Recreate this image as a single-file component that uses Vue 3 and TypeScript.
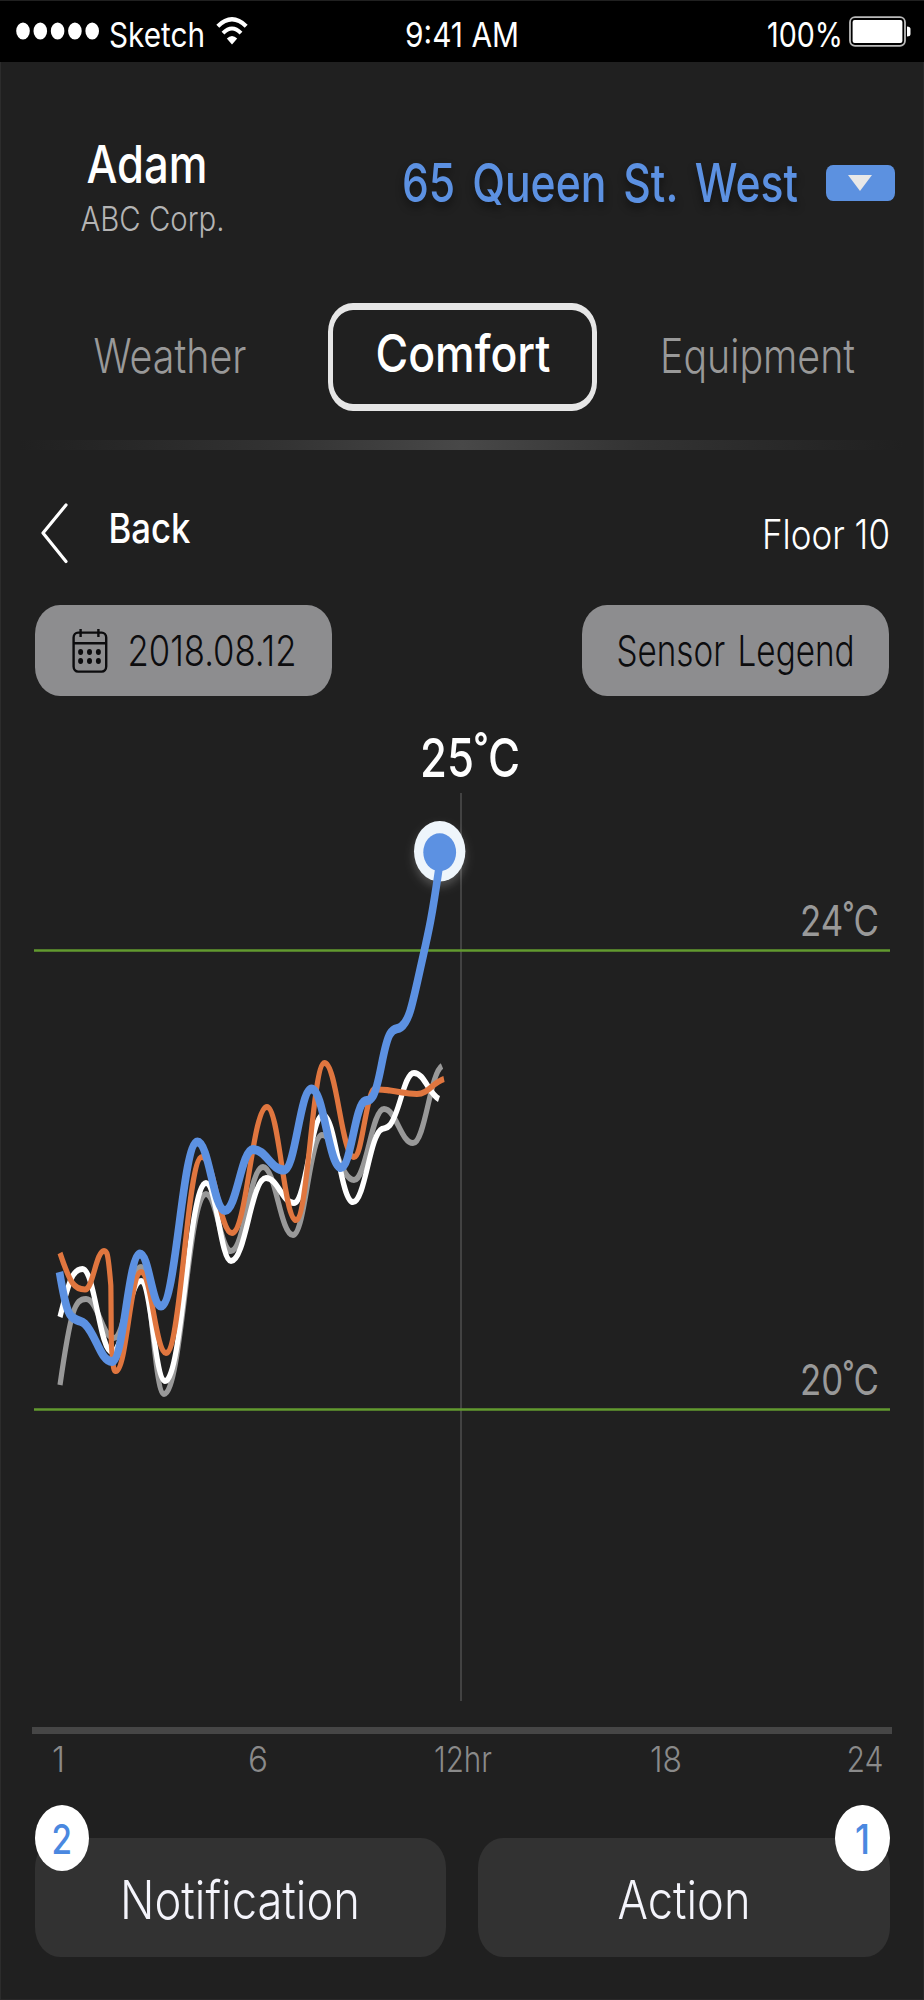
<script setup lang="ts">
import { h, type FunctionalComponent } from 'vue'

interface FitProps {
  text: string
  w: number
  cap: number
  weight?: number
  lead?: number
}

// Condensed label: the box is as wide as the word and as tall as its capitals.
const Fit: FunctionalComponent<FitProps> = (p) => {
  const size = p.cap / 0.727
  const lead = p.lead ?? size * 0.06
  return h('svg', { class: 'fit', width: p.w, height: p.cap }, [
    h(
      'text',
      {
        x: -lead,
        y: p.cap,
        'font-size': size,
        'font-weight': p.weight ?? 400,
        textLength: p.w + lead * 2,
        lengthAdjust: 'spacingAndGlyphs',
      },
      p.text,
    ),
  ])
}
Fit.props = ['text', 'w', 'cap', 'weight', 'lead']

type Point = [x: number, y: number, slope?: number]
interface Series {
  name: string
  points: Point[]
}

const STRETCH = 1.2
const EASE = 0.42

const series: Series[] = [
  {
    name: 'gray',
    points: [
      [60, 1385, -7], [86, 1299], [114, 1338], [141, 1267], [164, 1394], [206, 1194], [231, 1251], [263, 1167],
      [293, 1235], [322, 1135], [354, 1180], [384, 1109], [413, 1143], [442, 1066, -0.6],
    ],
  },
  {
    name: 'white',
    points: [
      [60, 1317, -4], [82.5, 1269], [112, 1352], [141, 1281], [165, 1381], [206, 1183], [231, 1261], [266, 1178],
      [294, 1203], [323, 1115], [353, 1202], [382, 1129, -0.4], [390, 1125, -1.2], [414, 1073], [439, 1099, 0.5],
    ],
  },
  {
    name: 'orange',
    points: [
      [60, 1253, 3], [85, 1289.5], [104, 1251], [110.8, 1285, 12], [111.4, 1345, 14], [116, 1371], [141, 1272],
      [166, 1353], [202, 1157], [232, 1233], [267, 1107], [296, 1220], [324.5, 1063], [354, 1157],
      [369, 1101, -4], [378, 1089.5], [390, 1090.5, 0.12], [417, 1094], [444, 1079, -0.3],
    ],
  },
  {
    name: 'blue',
    points: [
      [59.5, 1272, 6], [77, 1320, 0.5], [85, 1324, 1], [112, 1361.5], [140, 1254], [161, 1306], [197.5, 1142],
      [225, 1210.5], [253, 1149.5], [284, 1170], [311.5, 1089], [341, 1167.5], [365, 1101, -0.3], [373, 1096, -1.6],
      [390, 1034, -1.6], [401, 1027, -0.7], [420, 970, -4.5], [439, 868, -7],
    ],
  },
]

function curve(points: Point[]): string {
  const y = (v: number) => (v / STRETCH).toFixed(2)
  let d = `M${points[0][0]} ${y(points[0][1])}`
  for (let i = 1; i < points.length; i++) {
    const [x0, y0, m0 = 0] = points[i - 1]
    const [x1, y1, m1 = 0] = points[i]
    const k = (x1 - x0) * EASE
    d += ` C${(x0 + k).toFixed(2)} ${y(y0 + m0 * k)} ${(x1 - k).toFixed(2)} ${y(y1 - m1 * k)} ${x1} ${y(y1)}`
  }
  return d
}

const hours = [
  { text: '1', w: 9, lead: 2 },
  { text: '6', w: 16, lead: 2 },
  { text: '12hr', w: 56, lead: 1 },
  { text: '18', w: 28, lead: 2 },
  { text: '24', w: 34, lead: 1.5 },
]
</script>

<template>
  <main class="phone">
    <header class="status">
      <div class="carrier">
        <svg class="signal" width="84" height="18" viewBox="0 0 84 18">
          <ellipse v-for="i in 5" :key="i" :cx="7 + (i - 1) * 17.3" cy="9" rx="6.8" ry="8.6" />
        </svg>
        <Fit text="Sketch" :w="94" :cap="25" :lead="1" />
        <svg class="wifi" width="32" height="28" viewBox="0 0 32 28">
          <path d="M1.8 9.2Q16-4.6 30.2 9.2" stroke-width="4.2" />
          <path d="M7 16.2Q16 7 25 16.2" stroke-width="4" />
          <path d="M16 27.5L10.8 21.6Q16 16.4 21.2 21.6Z" class="solid" />
        </svg>
      </div>
      <Fit class="clock" text="9:41 AM" :w="112" :cap="25" :lead="1" />
      <div class="power">
        <Fit text="100%" :w="74" :cap="25" :lead="1" />
        <svg class="battery" width="62" height="32" viewBox="0 0 62 32">
          <rect x="1" y="1.2" width="55" height="28.6" rx="5" class="shell" />
          <rect x="3.6" y="4" width="49.8" height="23" rx="2" />
          <path d="M58 10.5Q61.5 10.5 61.5 13V18Q61.5 20.5 58 20.5Z" />
        </svg>
      </div>
    </header>

    <section class="account">
      <div class="user">
        <Fit class="name" text="Adam" :w="118" :cap="38" :weight="500" :lead="1.5" />
        <Fit class="company" text="ABC Corp." :w="141" :cap="25" :weight="300" :lead="1.5" />
      </div>
      <div class="site">
        <Fit class="address" text="65 Queen St. West" :w="394" :cap="38.5" :weight="500" :lead="1" />
        <button class="drop" aria-label="Choose site">
          <svg width="24" height="16" viewBox="0 0 24 16"><path d="M0 0H24L12 16Z" /></svg>
        </button>
      </div>
    </section>

    <nav class="tabs">
      <span class="tab"><Fit text="Weather" :w="152" :cap="34.5" :weight="300" :lead="0.5" /></span>
      <span class="tab active"><Fit text="Comfort" :w="172" :cap="37.5" :weight="500" :lead="1.5" /></span>
      <span class="tab"><Fit text="Equipment" :w="191" :cap="34.5" :weight="300" :lead="2" /></span>
    </nav>
    <div class="divider"></div>

    <section class="crumbs">
      <svg class="chevron" width="30" height="62" viewBox="0 0 30 62">
        <path d="M27 3L4 31L27 59.5" />
      </svg>
      <Fit class="back" text="Back" :w="79" :cap="30" :weight="500" :lead="1.5" />
      <Fit class="floor" text="Floor 10" :w="124" :cap="29.5" :weight="300" :lead="2" />
    </section>

    <section class="filters">
      <button class="chip date">
        <svg class="calendar" width="36" height="44" viewBox="0 0 36 44">
          <rect x="1.6" y="3.6" width="32.6" height="39" rx="4.5" ry="5" />
          <path d="M1.6 14.2H34.2M8.6 0V8M26.4 0V8" />
          <g class="dots">
            <template v-for="cy in [23, 32]" :key="cy">
              <ellipse v-for="cx in [8.6, 17.5, 26.4]" :key="cx" :cx="cx" :cy="cy" rx="2.5" ry="3" />
            </template>
          </g>
        </svg>
        <Fit text="2018.08.12" :w="166" :cap="31" :weight="300" :lead="1.5" />
      </button>
      <button class="chip legend">
        <Fit text="Sensor Legend" :w="235" :cap="31" :weight="300" :lead="1.5" />
      </button>
    </section>

    <svg class="chart" width="924" height="1031" viewBox="0 696 924 1031">
      <defs>
        <filter id="halo" x="-50%" y="-50%" width="200%" height="200%">
          <feDropShadow dx="0" dy="5" stdDeviation="5" flood-color="#fff" flood-opacity="0.22" />
        </filter>
      </defs>
      <line class="now" x1="461" x2="461" y1="793" y2="1701" />
      <line class="limit" x1="34" x2="890" y1="950.5" y2="950.5" />
      <line class="limit" x1="34" x2="890" y1="1409.5" y2="1409.5" />
      <ellipse class="ring" cx="439.7" cy="851.3" rx="25.7" ry="30.3" filter="url(#halo)" />
      <g :transform="`scale(1 ${STRETCH})`">
        <path v-for="s in series" :key="s.name" :class="['series', s.name]" :d="curve(s.points)" />
      </g>
      <ellipse class="core" cx="439.7" cy="852.3" rx="16.4" ry="19" />
      <text class="reading" x="420" y="777.3" font-size="54" textLength="100" lengthAdjust="spacingAndGlyphs">25˚C</text>
      <text class="bound" x="800" y="935.7" font-size="42.5" textLength="79" lengthAdjust="spacingAndGlyphs">24˚C</text>
      <text class="bound" x="800" y="1394.5" font-size="42.5" textLength="79" lengthAdjust="spacingAndGlyphs">20˚C</text>
    </svg>
    <div class="axis"></div>
    <div class="hours">
      <Fit v-for="t in hours" :key="t.text" :text="t.text" :w="t.w" :cap="26" :weight="300" :lead="t.lead" />
    </div>

    <footer class="actions">
      <button class="action">
        <span class="badge left"><Fit text="2" :w="17.5" :cap="29.5" :weight="500" :lead="1.5" /></span>
        <Fit text="Notification" :w="234" :cap="38.5" :weight="300" :lead="3" />
      </button>
      <button class="action">
        <span class="badge right"><Fit text="1" :w="11" :cap="29.5" :weight="500" :lead="2" /></span>
        <Fit text="Action" :w="130" :cap="38.5" :weight="300" :lead="1.5" />
      </button>
    </footer>
  </main>
</template>

<style>
body {
  margin: 0;
  background: #202020;
}
</style>

<style scoped>
.phone {
  width: 924px;
  height: 2000px;
  box-sizing: border-box;
  overflow: hidden;
  background: #202020;
  box-shadow: inset 1px 0 #2c2c2c, inset -1px -1px #292829;
  color: #fff;
  font-family: Inter, 'Liberation Sans', sans-serif;
}
svg {
  display: block;
  flex: none;
}
.fit {
  display: block;
  flex: none;
  overflow: visible;
  fill: currentColor;
}
button {
  padding: 0;
  border: 0;
  font: inherit;
  color: inherit;
}
.status {
  display: grid;
  grid-template-columns: 406px 362px 1fr;
  align-items: start;
  height: 62px;
  box-sizing: border-box;
  padding-top: 20.5px;
  border-top: 1px solid #202020;
  background: #000;
  margin-bottom: 83px;
}
.carrier {
  display: flex;
  padding-left: 16px;
}
.signal {
  fill: #fff;
  margin-right: 10px;
}
.wifi {
  margin: -5px 0 0 12px;
  fill: none;
  stroke: #fff;
}
.wifi .solid {
  fill: #fff;
  stroke: none;
}
.power {
  display: flex;
}
.battery {
  margin: -6px 0 0 7px;
  fill: #fff;
}
.battery .shell {
  fill: none;
  stroke: #bbb;
  stroke-width: 1.8;
}
.account {
  display: flex;
  justify-content: space-between;
  height: 157px;
  padding: 0 29px 0 82px;
}
.user {
  display: flex;
  flex-direction: column;
  gap: 22.5px;
  height: 87px;
}
.name {
  margin-left: 6px;
}
.company {
  color: #b4b4b4;
}
.site {
  display: flex;
  align-items: flex-start;
  padding-top: 17.5px;
}
.address {
  color: #5c91e2;
  word-spacing: 7px;
  filter: drop-shadow(0 5px 4px rgba(0, 0, 0, 0.45));
}
.drop {
  display: grid;
  place-items: center;
  width: 69.5px;
  height: 36px;
  margin: 2.5px 0 0 28.5px;
  border-radius: 7px / 8px;
  background: #5c91e0;
}
.drop svg {
  fill: #e8e8e8;
}
.tabs {
  display: grid;
  grid-template-columns: 246px 269px 191px;
  column-gap: 82px;
  grid-template-columns: 246px 269px 173.5px;
  height: 109px;
}
.tab {
  display: flex;
  justify-content: flex-end;
  padding-top: 35.5px;
  color: #999;
}
.tab.active {
  box-sizing: border-box;
  justify-content: center;
  margin-top: 1px;
  padding-top: 24px;
  border: solid #e6e6e6;
  border-width: 7px 5px;
  border-radius: 25px / 29px;
  color: #fff;
}
.divider {
  height: 10px;
  margin: 29px 20px 0;
  background: linear-gradient(90deg, #202020, #333 30%, #484848 50%, #333 70%, #202020);
}
.crumbs {
  display: flex;
  align-items: flex-start;
  height: 103px;
  padding: 52px 36px 0 39px;
}
.chevron {
  fill: none;
  stroke: #fff;
  stroke-width: 3.2;
  stroke-linecap: round;
  stroke-linejoin: round;
}
.back {
  margin: 11px 0 0 41px;
}
.floor {
  margin: 17px 0 0 auto;
}
.filters {
  display: flex;
  justify-content: space-between;
  padding: 0 35.5px 0 34.5px;
}
.chip {
  display: flex;
  align-items: center;
  justify-content: center;
  height: 91px;
  border-radius: 25px / 29px;
  background: #8d8d8f;
  color: #0c0c0e;
}
.date {
  width: 297.5px;
  gap: 21px;
  padding-left: 1px;
  box-sizing: border-box;
}
.legend {
  width: 307px;
  word-spacing: 4px;
}
.calendar {
  fill: none;
  stroke: #0c0c0e;
  stroke-width: 2.4;
}
.dots {
  fill: #0c0c0e;
  stroke: none;
}
.now {
  stroke: #424242;
  stroke-width: 2;
}
.limit {
  stroke: #629a2f;
  stroke-width: 2.4;
}
.series {
  fill: none;
  stroke-width: 5.2;
}
.gray {
  stroke: #999;
}
.white {
  stroke: #fff;
}
.orange {
  stroke: #e0763f;
}
.blue {
  stroke: #5c91e2;
  stroke-width: 7.6;
}
.ring {
  fill: #eef5fb;
}
.core {
  fill: #5c91e2;
}
.reading {
  fill: #fff;
  font-weight: 500;
}
.bound {
  fill: #999;
}
.axis {
  height: 6.5px;
  margin: 0.3px 32px 0 32.3px;
  background: #464646;
}
.hours {
  display: grid;
  grid-template-columns: 196px 185px 217px 196px 34px;
  align-items: start;
  box-sizing: border-box;
  height: 104px;
  padding: 12px 0 0 54px;
  color: #8a8a8a;
}
.actions {
  display: flex;
  gap: 32px;
  padding: 0 34.5px;
}
.action {
  position: relative;
  display: flex;
  flex: 1;
  align-items: center;
  justify-content: center;
  box-sizing: border-box;
  height: 119.5px;
  padding-top: 4px;
  border-radius: 25px / 30px;
  background: #323232;
  color: #f4f4fb;
}
.badge {
  position: absolute;
  top: -33px;
  display: grid;
  place-items: center;
  box-sizing: border-box;
  width: 54.5px;
  height: 66.5px;
  padding-top: 2px;
  border-radius: 50%;
  background: #fff;
  color: #4a88e0;
}
.badge.left {
  left: 0;
}
.badge.right {
  right: 0;
}
</style>
